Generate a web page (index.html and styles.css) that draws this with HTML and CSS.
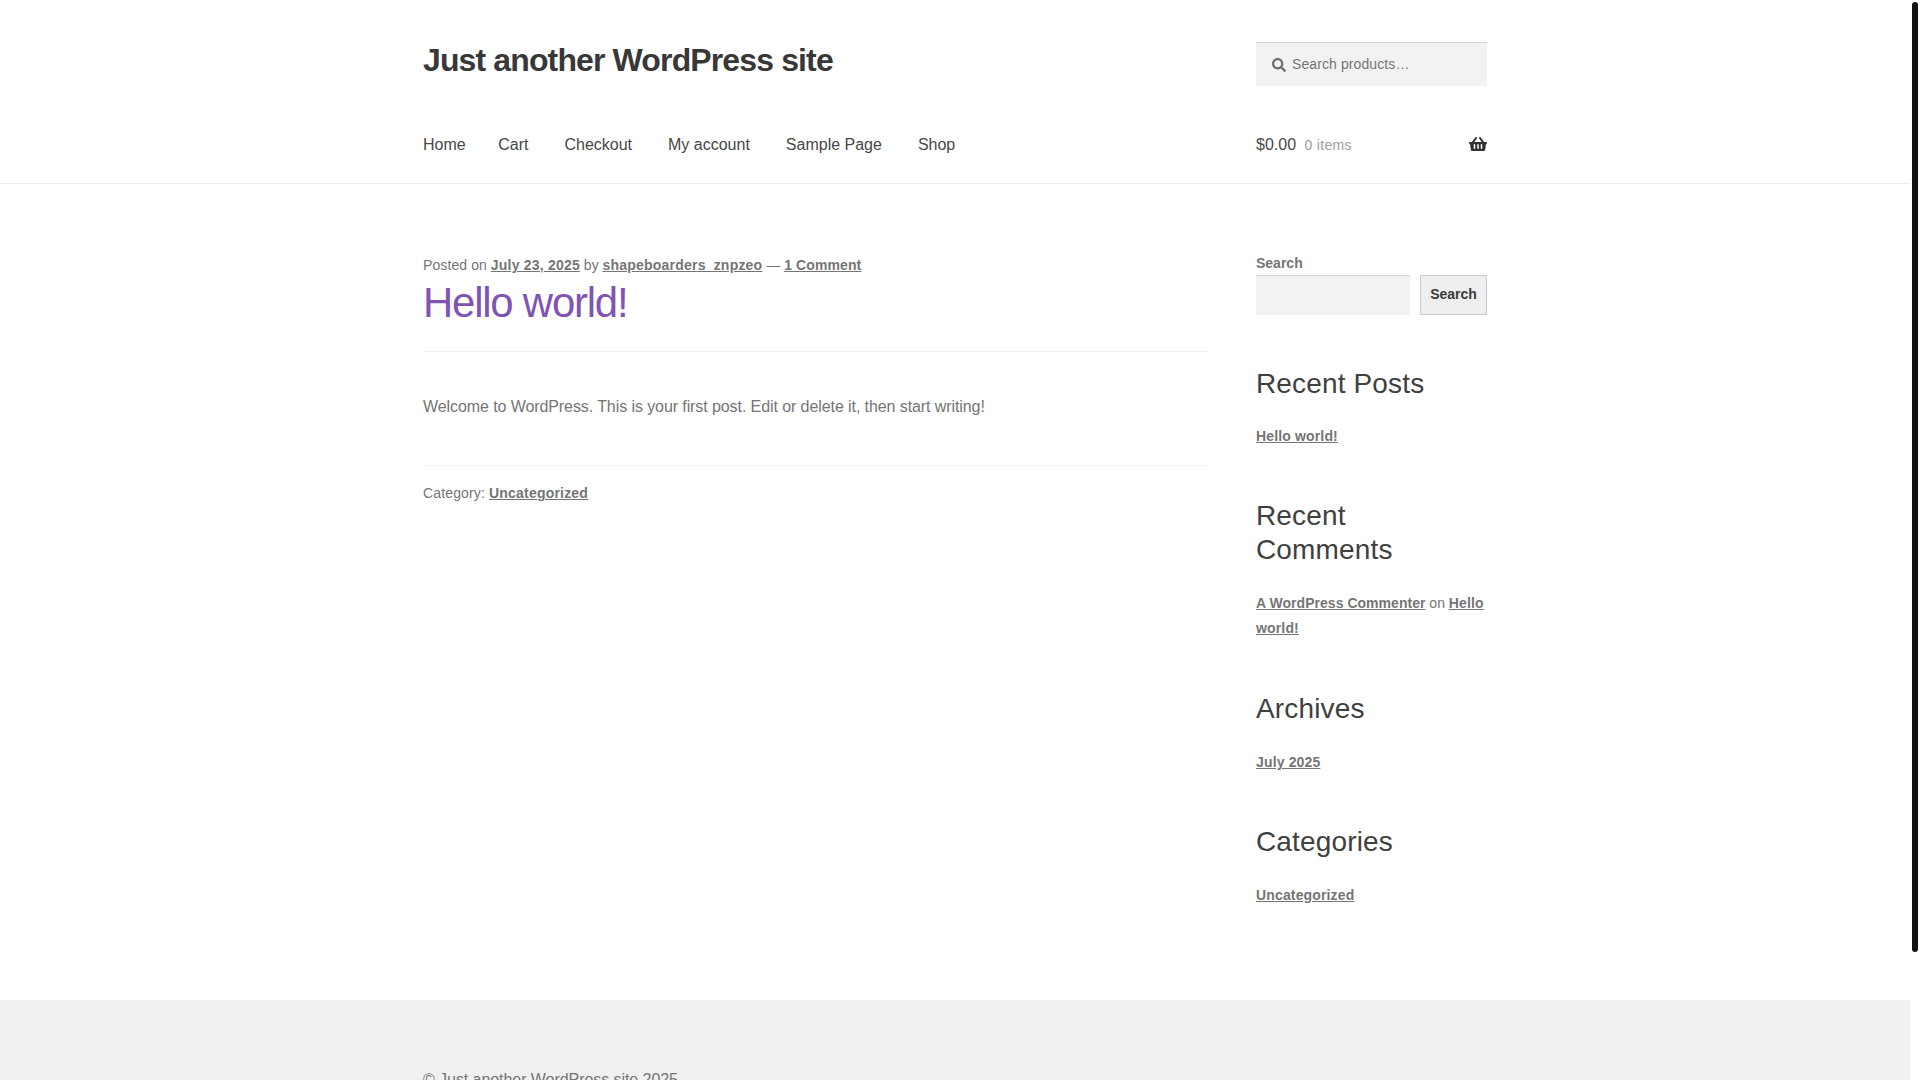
FILE: index.html
```html
<!DOCTYPE html>
<html lang="en">
<head>
<meta charset="utf-8">
<title>Just another WordPress site</title>
<link rel="stylesheet" href="styles.css">
</head>
<body>
<div class="page">
  <header class="site-header">
    <div class="col-full header-top">
      <a class="site-title" href="#">Just another WordPress site</a>
      <form class="product-search">
        <svg class="search-icon" viewBox="0 0 512 512"><path d="M505 442.7L405.3 343c-4.5-4.5-10.6-7-17-7H372c27.6-35.3 44-79.7 44-128C416 93.1 322.9 0 208 0S0 93.1 0 208s93.1 208 208 208c48.3 0 92.7-16.4 128-44v16.3c0 6.4 2.5 12.5 7 17l99.7 99.7c9.4 9.4 24.6 9.4 33.9 0l28.3-28.3c9.4-9.4 9.4-24.6.1-34zM208 336c-70.7 0-128-57.2-128-128 0-70.7 57.2-128 128-128 70.7 0 128 57.2 128 128 0 70.7-57.2 128-128 128z"/></svg>
        <span class="placeholder">Search products…</span>
      </form>
    </div>
    <div class="col-full header-nav">
      <nav class="main-nav">
        <a class="nav-first" href="#">Home</a>
        <a href="#">Cart</a>
        <a href="#">Checkout</a>
        <a href="#">My account</a>
        <a href="#">Sample Page</a>
        <a href="#">Shop</a>
      </nav>
      <a class="cart" href="#">
        <span class="amount">$0.00</span>
        <span class="count">0 items</span>
        <svg class="basket" viewBox="0 0 576 512"><path d="M576 216v16c0 13.255-10.745 24-24 24h-8l-26.113 182.788C514.509 462.435 494.257 480 470.37 480H105.63c-23.887 0-44.139-17.565-47.518-41.212L32 256h-8c-13.255 0-24-10.745-24-24v-16c0-13.255 10.745-24 24-24h67.341l106.78-146.821c10.395-14.292 30.407-17.453 44.701-7.058 14.293 10.395 17.453 30.408 7.058 44.701L170.477 192h235.046L326.12 82.821c-10.395-14.292-7.234-34.306 7.059-44.701 14.291-10.395 34.306-7.235 44.701 7.058L484.659 192H552c13.255 0 24 10.745 24 24zM312 392V280c0-13.255-10.745-24-24-24s-24 10.745-24 24v112c0 13.255 10.745 24 24 24s24-10.745 24-24zm112 0V280c0-13.255-10.745-24-24-24s-24 10.745-24 24v112c0 13.255 10.745 24 24 24s24-10.745 24-24zm-224 0V280c0-13.255-10.745-24-24-24s-24 10.745-24 24v112c0 13.255 10.745 24 24 24s24-10.745 24-24z"/></svg>
      </a>
    </div>
  </header>

  <div class="col-full content">
    <main class="main">
      <article>
        <div class="meta"><span class="meta-lead">Posted on</span> <a href="#">July 23, 2025</a> by <a href="#">shapeboarders_znpzeo</a> — <a class="tight" href="#">1 Comment</a></div>
        <h1 class="entry-title">Hello world!</h1>
        <p class="entry-body">Welcome to WordPress. This is your first post. Edit or delete it, then start writing!</p>
        <div class="meta entry-foot"><span class="cat-label">Category:</span> <a href="#">Uncategorized</a></div>
      </article>
    </main>
    <aside class="sidebar">
      <section class="widget-search">
        <label class="search-label">Search</label>
        <div class="search-row">
          <input class="search-input" type="text" aria-label="Search">
          <button class="search-button" type="button">Search</button>
        </div>
      </section>
      <section class="widget-posts">
        <h2 class="widget-title">Recent Posts</h2>
        <div class="widget-text"><a href="#">Hello world!</a></div>
      </section>
      <section class="widget-comments">
        <h2 class="widget-title">Recent Comments</h2>
        <div class="widget-text"><a class="tight" href="#">A WordPress Commenter</a> on <a href="#">Hello world!</a></div>
      </section>
      <section>
        <h2 class="widget-title">Archives</h2>
        <div class="widget-text"><a href="#">July 2025</a></div>
      </section>
      <section>
        <h2 class="widget-title">Categories</h2>
        <div class="widget-text"><a href="#">Uncategorized</a></div>
      </section>
    </aside>
  </div>

  <footer class="site-footer">
    <div class="col-full footer-text">© Just another WordPress site 2025</div>
  </footer>
</div>
<div class="scroll-thumb"></div>
</body>
</html>
```
FILE: styles.css
```css
html, body {
  margin: 0;
  padding: 0;
  height: 1080px;
  overflow: hidden;
  background: #fff;
}
body {
  font-family: "Liberation Sans", Arial, sans-serif;
  font-size: 16px;
  line-height: 1.618;
  color: #757575;
}
a { color: inherit; }
.page { width: 1910px; }
.col-full { width: 1064px; margin: 0 auto; }

.site-header { border-bottom: 1px solid #ededed; height: 183px; }
.header-top { display: flex; justify-content: space-between; align-items: flex-start; padding-top: 42px; }
.site-title {
  font-size: 32px;
  font-weight: 700;
  letter-spacing: -0.87px;
  line-height: 37px;
  color: #383838;
  text-decoration: none;
}
.product-search {
  box-sizing: border-box;
  width: 231px;
  height: 44px;
  background: #f2f2f2;
  border-top: 1px solid #d5d5d5;
  display: flex;
  align-items: center;
  gap: 6px;
  padding-left: 16px;
  font-size: 14px;
  letter-spacing: 0.1px;
  color: #757575;
}
.search-icon { width: 14px; height: 14px; fill: #6d6d6d; }
.header-nav { display: flex; justify-content: space-between; align-items: center; margin-top: 46px; }
.main-nav { display: flex; gap: 36px; color: #484848; }
.main-nav a { text-decoration: none; }
.main-nav .nav-first { margin-right: -3.5px; }
.cart { width: 231px; display: flex; align-items: center; color: #484848; text-decoration: none; }
.amount { margin-right: 8.5px; }
.count { font-size: 14px; letter-spacing: 0.3px; color: #a0a0a0; }
.basket { width: 18px; height: 16px; margin: 0 0 2px auto; fill: #333; }

.content { display: flex; justify-content: space-between; padding-top: 68px; }
.main { width: 786px; padding-top: 1px; }
.sidebar { width: 231px; height: 748px; }

.meta { font-size: 14px; line-height: 24px; }
.meta a { font-weight: 700; letter-spacing: 0.21px; }
.meta a.tight { letter-spacing: 0.1px; }
.meta-lead { letter-spacing: 0.1px; }
.cat-label { letter-spacing: 0.15px; }
.entry-title {
  margin: 1px 0 0;
  font-size: 41.89px;
  font-weight: 300;
  letter-spacing: -1.2px;
  line-height: 50px;
  color: #7f54b3;
}
.entry-body {
  margin: 23px 0 0;
  padding: 42px 0 45px;
  border-top: 1px solid #f0f0f0;
  border-bottom: 1px solid #f0f0f0;
  line-height: 26px;
  font-size: 16px;
  letter-spacing: -0.086px;
}
.entry-foot { margin-top: 15px; }

.widget-search { height: 115px; }
.search-label { display: block; font-size: 14px; font-weight: 700; line-height: 23px; }
.search-row { display: flex; justify-content: space-between; }
.search-input {
  box-sizing: border-box;
  width: 154px;
  height: 40px;
  border: 0;
  border-top: 1px solid #d5d5d5;
  background: #f2f2f2;
  padding: 0;
  margin: 0;
}
.search-button {
  box-sizing: border-box;
  width: 67px;
  height: 40px;
  padding: 0 0 2px;
  border: 1px solid #ccc;
  background: #eee;
  color: #3a3a3a;
  font: 700 14px "Liberation Sans", Arial, sans-serif;
}
.widget-title {
  margin: 0;
  font-size: 28px;
  font-weight: 400;
  letter-spacing: 0.15px;
  line-height: 34px;
  color: #404040;
}
.widget-text { font-size: 14px; line-height: 25px; margin-top: 24px; margin-bottom: 50px; }
.widget-posts .widget-text { margin-top: 23px; }
.widget-comments .widget-text { margin-bottom: 51px; }
.widget-text a { font-weight: 700; letter-spacing: 0.15px; }
.widget-text a.tight { letter-spacing: 0.03px; }

.site-footer { background: #f0f0f0; height: 80px; }
.footer-text { font-size: 16px; line-height: 24px; padding-top: 68px; letter-spacing: -0.06px; color: #757575; }

.scroll-thumb {
  position: absolute;
  top: 2px;
  left: 1912px;
  width: 6px;
  height: 950px;
  border-radius: 3px;
  background: #111;
}
```
